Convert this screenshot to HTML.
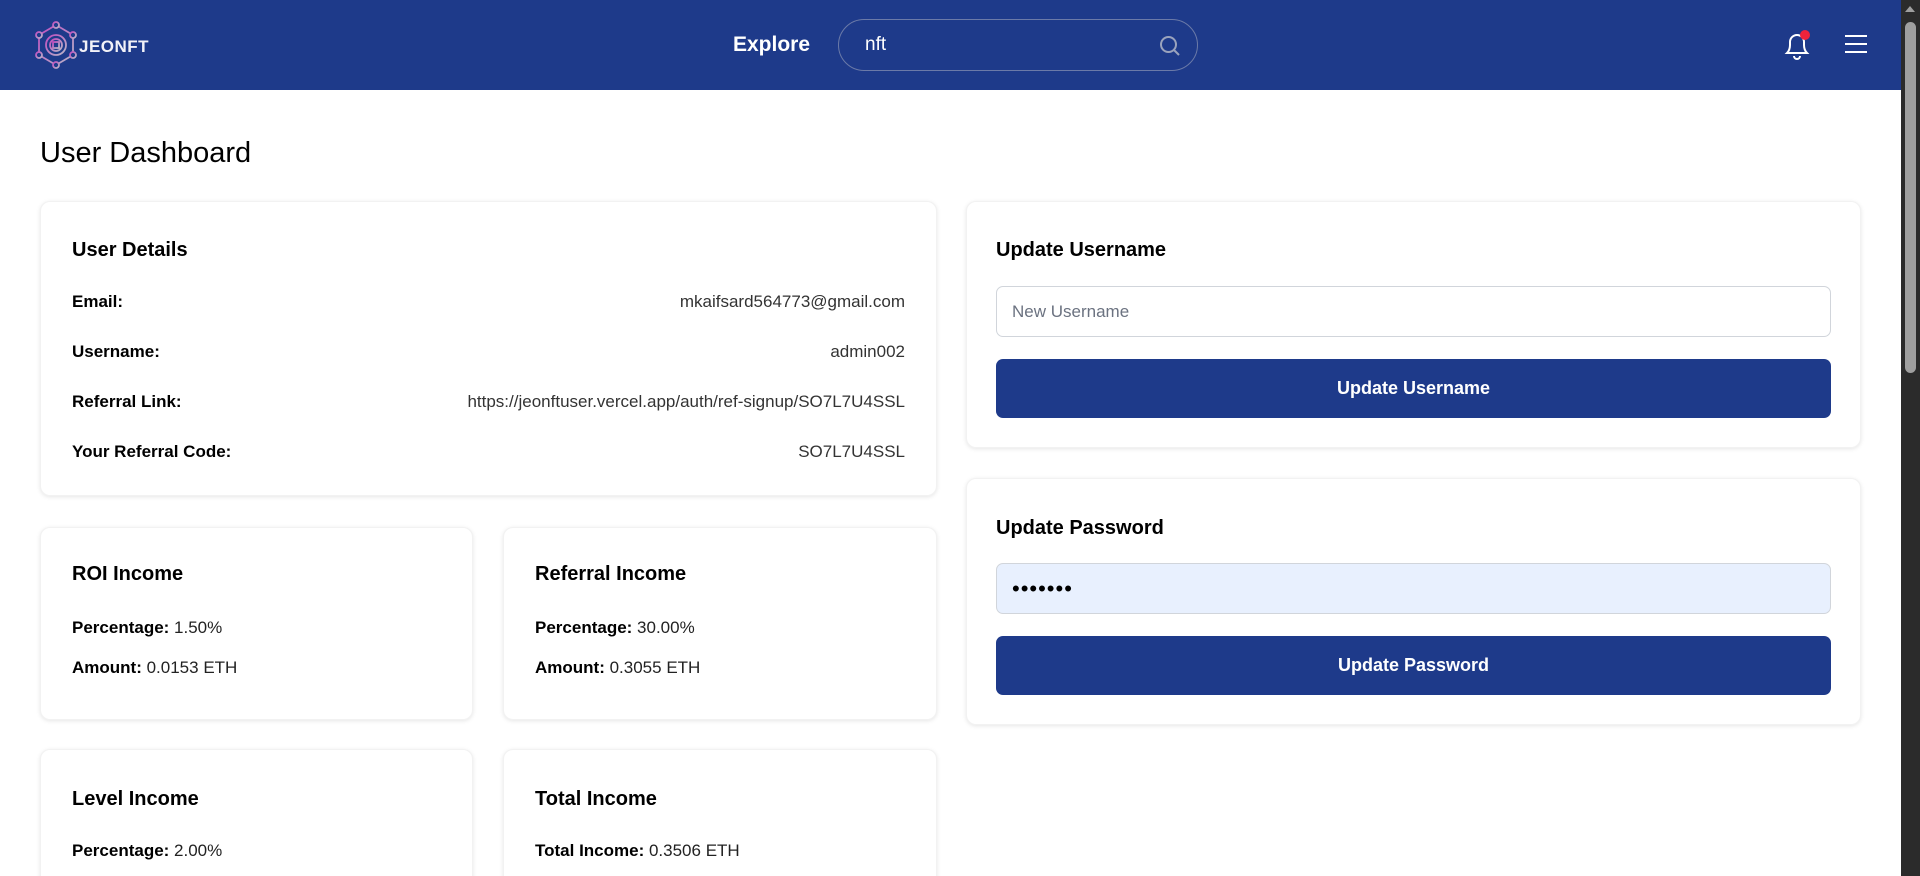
<!DOCTYPE html>
<html style="width:1920px;height:876px;overflow:hidden"><head><meta charset="utf-8"><style>
*{box-sizing:border-box;margin:0;padding:0}
body{width:1920px;height:876px;overflow:hidden;background:#fff;font-family:"Liberation Sans",sans-serif;color:#000;position:relative}
.hdr{position:absolute;left:0;top:0;width:1901px;height:90px;background:#1e3a8a}
.sb{position:absolute;left:1901px;top:0;width:19px;height:876px;background:#2b2b2b}
.thumb{position:absolute;left:1905px;top:22px;width:11px;height:351px;background:#9f9f9f;border-radius:6px}
.arrow{position:absolute;left:1905px;top:6px;width:0;height:0;border-left:5px solid transparent;border-right:5px solid transparent;border-bottom:6px solid #9f9f9f}
.card{position:absolute;background:#fff;border-radius:10px;box-shadow:0 1px 4px rgba(0,0,0,.1);border:1px solid #f2f2f2}
.t{position:absolute;font-weight:bold;font-size:20px;line-height:24px}
.row{position:absolute;left:31px;right:31px;font-size:17px;line-height:22px;display:flex;justify-content:space-between}
.row b{font-weight:bold}
.row span{color:#333}
.p{position:absolute;left:31px;font-size:17px;line-height:22px;color:#222}
.p b{color:#000}
.inp{position:absolute;left:29px;right:29px;height:51px;border:1px solid #d1d5db;border-radius:7px;font-size:17px;line-height:49px;padding-left:15px}
.btn{position:absolute;left:29px;right:29px;height:59px;background:#1e3a8a;border-radius:7px;color:#fff;font-weight:bold;font-size:18px;line-height:59px;text-align:center}
</style></head><body>
<div class="hdr">
<svg style="position:absolute;left:32px;top:21px" width="48" height="48" viewBox="0 0 48 48" fill="none" stroke-width="1.8">
<defs><linearGradient id="g" x1="0" y1="0" x2="1" y2="1"><stop offset="0" stop-color="#c04cc0"/><stop offset="1" stop-color="#b8b8c8"/></linearGradient></defs>
<g stroke="url(#g)"><polygon points="24,4 41,14 41,34 24,44 7,34 7,14"/>
<circle cx="24" cy="24" r="10"/><circle cx="24" cy="24" r="6"/><rect x="21" y="21" width="6" height="6"/>
<circle cx="24" cy="4" r="3" fill="#1e3a8a"/><circle cx="41" cy="14" r="3" fill="#1e3a8a"/><circle cx="41" cy="34" r="3" fill="#1e3a8a"/><circle cx="24" cy="44" r="3" fill="#1e3a8a"/><circle cx="7" cy="34" r="3" fill="#1e3a8a"/><circle cx="7" cy="14" r="3" fill="#1e3a8a"/></g></svg>
<div style="position:absolute;left:79px;top:37px;color:#f2f2f8;font-weight:bold;font-size:17px;letter-spacing:0.5px">JEONFT</div>
<div style="position:absolute;left:733px;top:33px;color:#fff;font-weight:bold;font-size:21px">Explore</div>
<div style="position:absolute;left:838px;top:19px;width:360px;height:52px;border:1px solid #6b7aa8;border-radius:26px"></div>
<div style="position:absolute;left:865px;top:34px;color:#fff;font-size:19px">nft</div>
<svg style="position:absolute;left:1158px;top:34px" width="24" height="24" viewBox="0 0 24 24" fill="none" stroke="#9aa3bd" stroke-width="2"><circle cx="10.5" cy="10.5" r="7.5"/><path d="M16 16l5 5"/></svg>
<svg style="position:absolute;left:1783px;top:30px" width="28" height="30" viewBox="0 0 28 30" fill="none" stroke="#fff" stroke-width="2"><path d="M4 23h20c-2-2-3-4-3-8v-3a7 7 0 0 0-14 0v3c0 4-1 6-3 8z"/><path d="M11 26a3 3 0 0 0 6 0"/></svg>
<div style="position:absolute;left:1800px;top:30px;width:10px;height:10px;border-radius:50%;background:#ef233c"></div>
<div style="position:absolute;left:1845px;top:35px;width:22px;height:2px;background:#fff"></div>
<div style="position:absolute;left:1845px;top:43px;width:22px;height:2px;background:#fff"></div>
<div style="position:absolute;left:1845px;top:51px;width:22px;height:2px;background:#fff"></div>
</div>
<div class="sb"></div><div class="arrow"></div><div class="thumb"></div>

<div style="position:absolute;left:40px;top:136px;font-size:29px;line-height:34px">User Dashboard</div>

<div class="card" style="left:40px;top:201px;width:897px;height:295px">
<div class="t" style="left:31px;top:36px">User Details</div>
<div class="row" style="top:89px"><b>Email:</b><span>mkaifsard564773@gmail.com</span></div>
<div class="row" style="top:139px"><b>Username:</b><span>admin002</span></div>
<div class="row" style="top:189px"><b>Referral Link:</b><span>https://jeonftuser.vercel.app/auth/ref-signup/SO7L7U4SSL</span></div>
<div class="row" style="top:239px"><b>Your Referral Code:</b><span>SO7L7U4SSL</span></div>
</div>

<div class="card" style="left:40px;top:527px;width:433px;height:193px">
<div class="t" style="left:31px;top:34px">ROI Income</div>
<div class="p" style="top:89px"><b>Percentage:</b> 1.50%</div>
<div class="p" style="top:129px"><b>Amount:</b> 0.0153 ETH</div>
</div>
<div class="card" style="left:503px;top:527px;width:434px;height:193px">
<div class="t" style="left:31px;top:34px">Referral Income</div>
<div class="p" style="top:89px"><b>Percentage:</b> 30.00%</div>
<div class="p" style="top:129px"><b>Amount:</b> 0.3055 ETH</div>
</div>
<div class="card" style="left:40px;top:749px;width:433px;height:140px">
<div class="t" style="left:31px;top:37px">Level Income</div>
<div class="p" style="top:90px"><b>Percentage:</b> 2.00%</div>
</div>
<div class="card" style="left:503px;top:749px;width:434px;height:140px">
<div class="t" style="left:31px;top:37px">Total Income</div>
<div class="p" style="top:90px"><b>Total Income:</b> 0.3506 ETH</div>
</div>

<div class="card" style="left:966px;top:201px;width:895px;height:247px">
<div class="t" style="left:29px;top:36px">Update Username</div>
<div class="inp" style="top:84px;color:#6b7280">New Username</div>
<div class="btn" style="top:157px">Update Username</div>
</div>
<div class="card" style="left:966px;top:478px;width:895px;height:247px">
<div class="t" style="left:29px;top:37px">Update Password</div>
<div class="inp" style="top:84px;background:#e8f0fe;font-size:22px;letter-spacing:1px">•••••••</div>
<div class="btn" style="top:157px">Update Password</div>
</div>
</body></html>
